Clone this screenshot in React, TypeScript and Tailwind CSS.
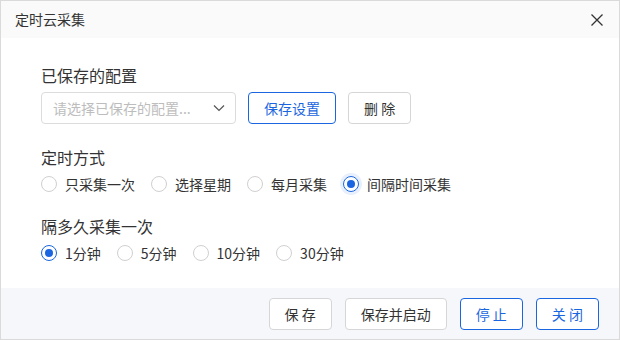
import { useState } from 'react';

const font = { fontFamily: '"Noto Sans CJK SC", "Noto Sans", sans-serif' };

const Radio = ({ label, checked, halo, onClick }: { label: string; checked: boolean; halo?: boolean; onClick: () => void }) => (
  <button onClick={onClick} className="flex items-center h-5 mr-[16px] text-[14px] text-[#333] leading-5">
    <span
      className={`w-4 h-4 rounded-full border flex items-center justify-center ${
        checked ? 'border-[#1a66e0]' : 'border-[#d0d0d0]'
      } ${halo ? 'shadow-[0_0_0_3px_#e8f0fd]' : ''}`}
    >
      {checked && <span className="w-2 h-2 rounded-full bg-[#1a66e0]" />}
    </span>
    <span className="ml-2">{label}</span>
  </button>
);

const Btn = ({ children, primary, className = '' }: { children: string; primary?: boolean; className?: string }) => (
  <button
    className={`h-[32px] px-[15px] rounded-[4px] border text-[14px] leading-none bg-white ${
      primary ? 'border-[#1a66e0] text-[#1a66e0]' : 'border-[#d6d6d6] text-[#333]'
    } ${className}`}
  >
    {children}
  </button>
);

export default function App() {
  const [mode, setMode] = useState('间隔时间采集');
  const [interval, setIntervalVal] = useState('1分钟');

  return (
    <div style={font} className="w-[620px] h-[340px] border border-[#dadada] bg-white flex flex-col">
      {/* 标题栏 */}
      <div className="h-[37px] bg-[#fafafa] flex items-center justify-between pl-[14px] pr-[15px]">
        <span className="text-[14px] text-[#333]">定时云采集</span>
        <svg width="14" height="14" viewBox="0 0 14 14" className="mt-[1px]">
          <path d="M1.5 1.5 L12.5 12.5 M12.5 1.5 L1.5 12.5" stroke="#333" strokeWidth="1.3" fill="none" />
        </svg>
      </div>

      {/* 内容 */}
      <div className="flex-1 pl-[40px] pt-[26px]">
        <div className="text-[16px] leading-[22px] text-[#333]">已保存的配置</div>
        <div className="flex items-center mt-[6px]">
          <div className="w-[195px] h-[32px] border border-[#dcdcdc] rounded-[4px] flex items-center justify-between pl-[11px] pr-[10px]">
            <span className="text-[14px] text-[#bdbdbd]">请选择已保存的配置...</span>
            <svg width="12" height="8" viewBox="0 0 12 8">
              <path d="M1 1.5 L6 6.5 L11 1.5" stroke="#555" strokeWidth="1.2" fill="none" />
            </svg>
          </div>
          <Btn primary className="ml-[12px]">保存设置</Btn>
          <Btn className="ml-[12px]">删 除</Btn>
        </div>

        <div className="text-[16px] leading-[22px] text-[#333] mt-[22px]">定时方式</div>
        <div className="flex mt-[6px]">
          {['只采集一次', '选择星期', '每月采集', '间隔时间采集'].map(m => (
            <Radio key={m} label={m} checked={mode === m} halo={m === '间隔时间采集'} onClick={() => setMode(m)} />
          ))}
        </div>

        <div className="text-[16px] leading-[22px] text-[#333] mt-[21px]">隔多久采集一次</div>
        <div className="flex mt-[6px]">
          {['1分钟', '5分钟', '10分钟', '30分钟'].map(m => (
            <Radio key={m} label={m} checked={interval === m} onClick={() => setIntervalVal(m)} />
          ))}
        </div>
      </div>

      {/* 底部按钮 */}
      <div className="h-[51px] bg-[#f5f7fa] flex items-center justify-end gap-[13px] pr-[20px]">
        <Btn>保 存</Btn>
        <Btn>保存并启动</Btn>
        <Btn primary>停 止</Btn>
        <Btn primary>关 闭</Btn>
      </div>
    </div>
  );
}
